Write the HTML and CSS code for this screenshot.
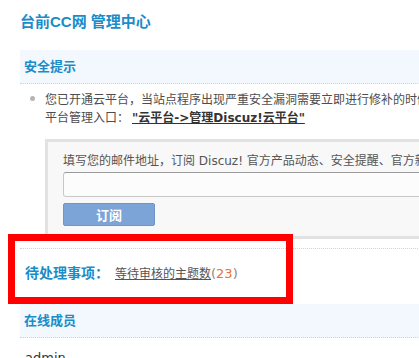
FILE: index.html
```html
<!DOCTYPE html>
<html lang="zh-CN">
<head>
    <meta charset="UTF-8">
    <title>台前CC网 管理中心</title>
    <link rel="stylesheet" href="styles.css">
</head>
<body>
    <div class="container">
        <h1 class="page-title">台前CC网 管理中心</h1>

        <div class="section-head">安全提示</div>
        <ul class="tips">
            <li>
                <span class="line">您已开通云平台，当站点程序出现严重安全漏洞需要立即进行修补的时候，云平台会第一时间通知您，请及时进入云</span>
                <span class="line">平台管理入口：<a href="#" class="strong-link">"云平台-&gt;管理Discuz!云平台"</a></span>
            </li>
        </ul>

        <div class="subscribe">
            <p>填写您的邮件地址，订阅 Discuz! 官方产品动态、安全提醒、官方新闻、升级通知等重要信息</p>
            <input type="text" class="mail-input">
            <button type="button" class="btn">订阅</button>
        </div>

        <div class="pending">
            <span class="pending-title">待处理事项：</span><a href="#" class="pending-link">等待审核的主题数</a><span class="count">(<em>23</em>)</span>
        </div>

        <div class="section-head">在线成员</div>
        <div class="members">
            <a href="#">admin</a>
        </div>
    </div>

    <!-- 标注框 -->
    <div class="mark"></div>
</body>
</html>
```

FILE: styles.css
```css
html, body {
    margin: 0;
    padding: 0;
    overflow: hidden;
    background-color: #fff;
}
body {
    font-family: "DejaVu Sans", "Noto Sans CJK SC", sans-serif;
    font-size: 12px;
    line-height: 18px;
    color: #4d4d4d;
}
.container {
    width: 760px;
    padding-left: 20px;
}
.page-title {
    margin: 0;
    padding-top: 13px;
    font-family: "Liberation Sans", "Noto Sans CJK SC", sans-serif;
    font-size: 15px;
    line-height: 18px;
    color: #1a8cc8;
}
.section-head {
    height: 33px;
    line-height: 33px;
    margin-top: 19px;
    padding-left: 4px;
    background-color: #f2f8fd;
    border-bottom: 1px dotted #c8d4de;
    font-size: 13px;
    font-weight: bold;
    color: #1a8cc8;
}
.tips {
    margin: 7px 0 0 0;
    padding: 0;
    list-style: none;
}
.tips li {
    position: relative;
    padding-left: 25px;
}
.tips li::before {
    content: "";
    position: absolute;
    left: 10px;
    top: 5px;
    width: 5px;
    height: 5px;
    border-radius: 50%;
    background-color: #b5b5b5;
}
.line {
    display: block;
    white-space: nowrap;
}
.strong-link {
    margin-left: 3px;
    color: #333;
    font-weight: bold;
    text-decoration: underline;
}
.subscribe {
    margin: 12px 0 0 25px;
    padding: 10px 15px;
    border: 3px solid #e2e2e2;
    background-color: #f8f8f8;
}
.subscribe p {
    margin: 0;
    white-space: nowrap;
    color: #555;
}
.mail-input {
    display: block;
    box-sizing: border-box;
    width: 100%;
    height: 25px;
    margin-top: 2px;
    border: 1px solid #c8c8c8;
    border-top-color: #9a9a9a;
    border-radius: 3px;
    background-color: #fcfcfc;
}
.btn {
    display: block;
    width: 92px;
    height: 23px;
    margin-top: 6px;
    padding: 0;
    border: 1px solid #6f95c8;
    border-radius: 2px;
    background-color: #7ca4d7;
    color: #fff;
    font-family: "Noto Sans CJK SC", sans-serif;
    font-size: 13px;
    font-weight: bold;
}
.pending {
    margin-top: 9px;
    height: 48px;
    line-height: 48px;
    padding-left: 5px;
    border-top: 1px dotted #c8d4de;
}
.pending-title {
    font-size: 14px;
    font-weight: bold;
    color: #1a8cc8;
}
.pending-link {
    margin-left: 6px;
    color: #555;
    text-decoration: underline;
}
.count {
    color: #888;
    font-size: 13px;
}
.count em {
    font-style: normal;
    color: #ee7130;
}
.pending + .section-head {
    margin-top: 7px;
}
.members {
    margin-top: 11px;
    padding-left: 5px;
}
.members a {
    color: #333;
    text-decoration: none;
    font-size: 13px;
}
.mark {
    position: absolute;
    left: 8px;
    top: 234px;
    width: 271px;
    height: 56px;
    border: 7px solid #f00;
}
```
